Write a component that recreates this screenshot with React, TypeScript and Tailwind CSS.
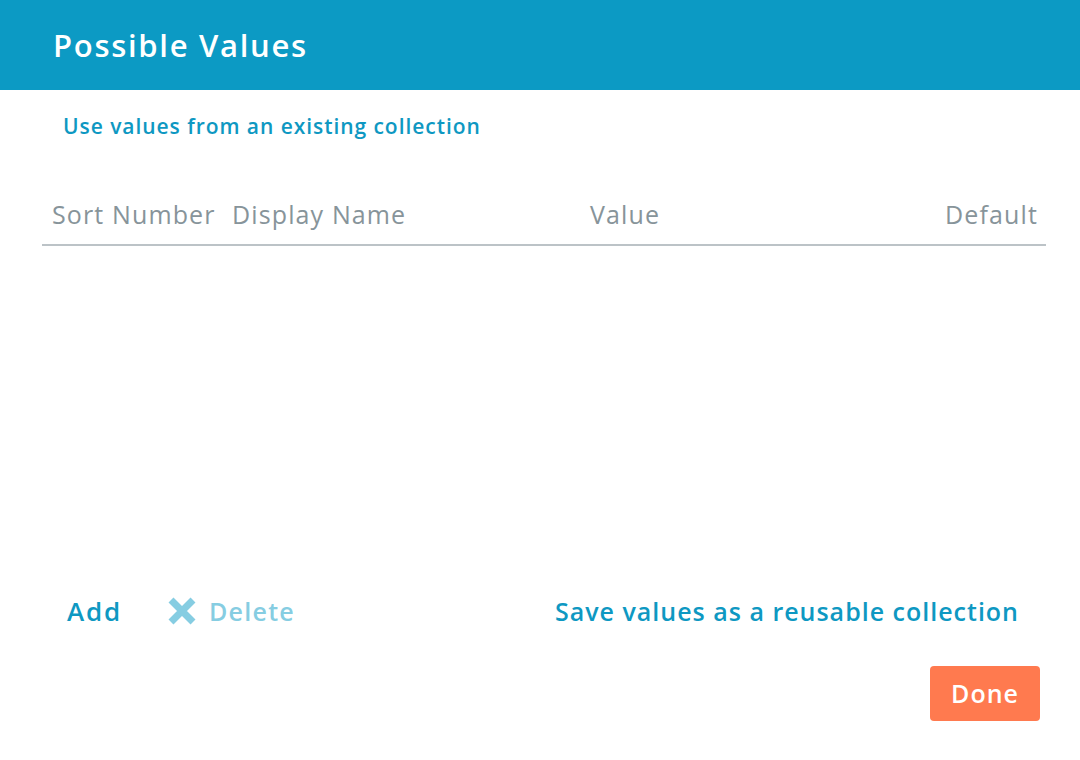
import React from 'react';

const font = { fontFamily: '"Open Sans", "Noto Sans", sans-serif' };

export default function App() {
  return (
    <div className="w-[1080px] h-[760px] bg-white flex flex-col" style={font}>
      <div className="h-[90px] bg-[#0c9ac4] flex items-center pl-[53px] shrink-0">
        <h1 className="text-white text-[31px] font-semibold leading-none tracking-[0.055em]">Possible Values</h1>
      </div>

      <div className="pl-[63px] pt-[22px]">
        <a className="text-[#0e98c2] text-[21px] font-semibold leading-[28px] tracking-[0.045em] cursor-pointer">
          Use values from an existing collection
        </a>
      </div>

      <div className="ml-[42px] mr-[34px] mt-[56px] border-b-2 border-[#bcc3c7] flex items-center h-[50px] text-[25px] text-[#87949a] leading-none pb-[12px] tracking-[0.045em]">
        <div className="w-[180px] pl-[10px]">Sort Number</div>
        <div className="w-[368px] pl-[10px]">Display Name</div>
        <div className="flex-1">Value</div>
        <div className="pr-[8px]">Default</div>
      </div>

      <div className="flex-1" />

      <div className="flex items-center pl-[67px] pr-[61px] text-[25px] font-semibold leading-none tracking-[0.04em]">
        <button className="text-[#0e98c2] text-[26px] tracking-[0.07em]">Add</button>
        <button className="flex items-center ml-[45px] text-[#86cde2] gap-[12px] tracking-[0.05em]">
          <svg width="30" height="30" viewBox="0 0 30 30">
            <path d="M4 4 L26 26 M26 4 L4 26" stroke="#86cde2" strokeWidth="7" strokeLinecap="butt" />
          </svg>
          Delete
        </button>
        <div className="flex-1" />
        <button className="text-[#0e98c2]">Save values as a reusable collection</button>
      </div>

      <div className="flex justify-end pr-[40px] pt-[40px] pb-[39px]">
        <button className="w-[110px] h-[55px] bg-[#ff7a4f] rounded-[4px] text-white text-[25px] font-semibold tracking-[0.04em]">
          Done
        </button>
      </div>
    </div>
  );
}
